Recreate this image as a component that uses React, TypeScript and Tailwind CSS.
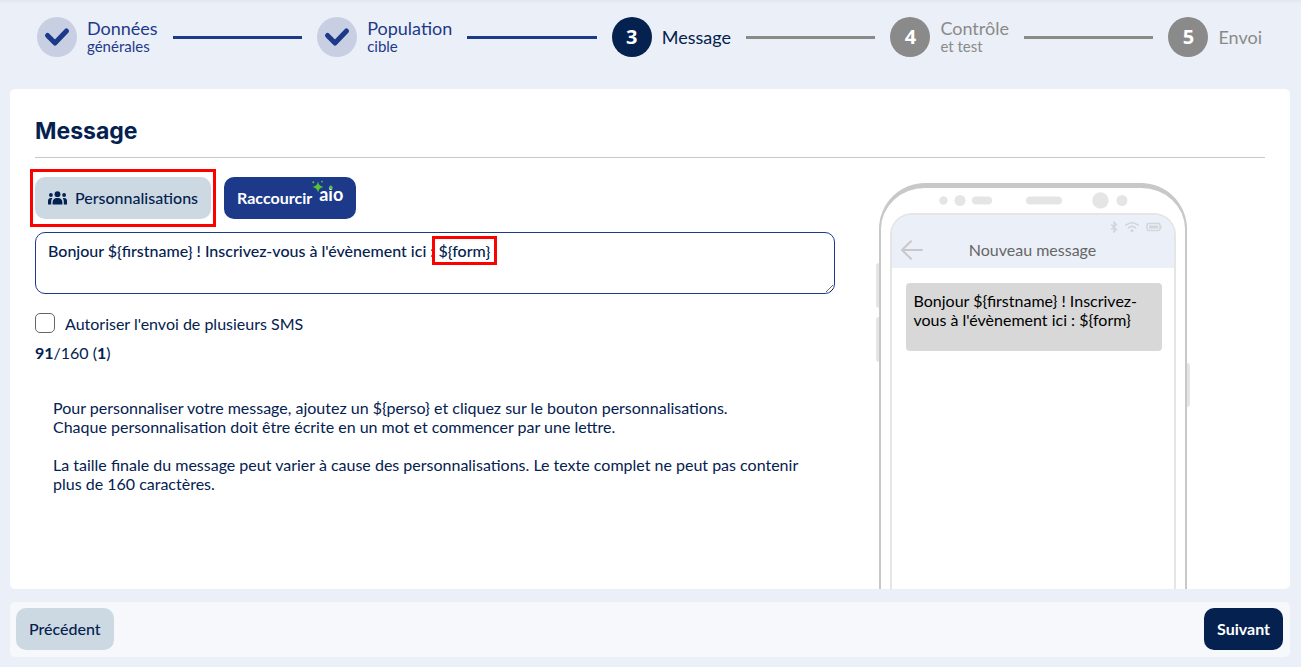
import { Fragment, useState } from "react"

interface Step {
    title: string
    subtitle?: string
    state: "done" | "current" | "todo"
}

const steps: Step[] = [
    { title: "Données", subtitle: "générales", state: "done" },
    { title: "Population", subtitle: "cible", state: "done" },
    { title: "Message", state: "current" },
    { title: "Contrôle", subtitle: "et test", state: "todo" },
    { title: "Envoi", state: "todo" },
]

const circleStyles = {
    done: "bg-[#c9cfe2] text-[#1d3a8a]",
    current: "bg-[#04214f] text-white",
    todo: "bg-[#8a8a8a] text-white",
}

const labelStyles = {
    done: "text-[#1d3a8a]",
    current: "text-[#04214f]",
    todo: "text-[#8a8a8a]",
}

const MAX_LENGTH = 160
const PLACEHOLDER_EXTRA = 26

function Stepper() {
    return (
        <ol className="flex items-center gap-[15px] pt-[17px] pr-[39px] pl-[37px]">
            {steps.map((step, index) => (
                <Fragment key={step.title}>
                    <li className="flex items-center gap-2.5">
                        <span className={`flex size-10 shrink-0 items-center justify-center rounded-full font-['Open_Sans',sans-serif] text-xl leading-5 font-bold ${circleStyles[step.state]}`}>
                            {step.state === "done" ? (
                                <svg viewBox="0 0 40 40" className="size-10" fill="none" stroke="currentColor" strokeWidth="5" strokeLinecap="round" strokeLinejoin="round" aria-hidden="true">
                                    <path d="M10.5 18.5l7.5 7.5L29.5 14" />
                                </svg>
                            ) : (
                                index + 1
                            )}
                        </span>
                        <span className={labelStyles[step.state]}>
                            <span className="block text-lg leading-[18px]">{step.title}</span>
                            {step.subtitle && <span className="block text-[15px] leading-[18px]">{step.subtitle}</span>}
                        </span>
                    </li>
                    {index < steps.length - 1 && (
                        <li aria-hidden="true" className={`h-[3px] flex-1 ${step.state === "done" ? "bg-[#1d3a8a]" : "bg-[#8a8a8a]"}`} />
                    )}
                </Fragment>
            ))}
        </ol>
    )
}

function PeopleIcon() {
    return (
        <svg viewBox="0 0 19 14" className="h-3.5 w-[19px]" fill="currentColor" aria-hidden="true">
            <circle cx="9.5" cy="3.2" r="2.9" />
            <circle cx="2.9" cy="4" r="1.9" />
            <circle cx="16.1" cy="4" r="1.9" />
            <path d="M4.6 13.5v-2.2a4.2 4.2 0 0 1 4.2-4.2h1.4a4.2 4.2 0 0 1 4.2 4.2v2.2z" />
            <path d="M0 13.5v-3.4a3 3 0 0 1 3-3h1.3a6 6 0 0 0-1.1 3.6v2.8z" />
            <path d="M19 13.5v-3.4a3 3 0 0 0-3-3h-1.3a6 6 0 0 1 1.1 3.6v2.8z" />
        </svg>
    )
}

function AioLogo() {
    return (
        <span className="relative block pl-[7px] text-lg leading-5 font-bold">
            aio
            <svg viewBox="0 0 24 16" className="absolute -top-1 left-0 h-4 w-6" fill="#5bc236" aria-hidden="true">
                <path d="M6 1.5Q6.8 6.2 11.5 7Q6.8 7.8 6 12.5Q5.2 7.8.5 7Q5.2 6.2 6 1.5z" />
                <circle cx="1.3" cy="2.3" r="1" />
                <circle cx="10" cy="1.6" r=".9" />
                <circle cx="18.8" cy="7.4" r="1.8" />
            </svg>
        </span>
    )
}

function Phone({ message }: { message: string }) {
    return (
        <div className="relative w-[308px] shrink-0 rounded-t-[46px] border-x-2 border-t-[5px] border-[#c8c8c8] px-[9px]">
            {/* Side buttons */}
            <span className="absolute top-[75px] -left-[5px] h-[45px] w-[3px] rounded-l-sm bg-[#e5e5e5]" />
            <span className="absolute top-[129px] -left-[5px] h-[45px] w-[3px] rounded-l-sm bg-[#e5e5e5]" />
            <span className="absolute top-[175px] -right-[5px] h-[44px] w-[3px] rounded-r-sm bg-[#e5e5e5]" />

            <div className="flex h-full flex-col">
                <svg viewBox="0 0 286 25" className="block h-[25px] w-full shrink-0" fill="#e5e5e5" aria-hidden="true">
                    <circle cx="53.5" cy="12.5" r="4.2" />
                    <circle cx="70" cy="12.5" r="5.6" />
                    <rect x="82" y="8.5" width="20" height="8" rx="4" />
                    <rect x="136" y="8.5" width="36" height="8" rx="4" />
                    <circle cx="210.5" cy="12.5" r="8.2" />
                    <circle cx="232" cy="12.5" r="5.5" />
                </svg>
                <div className="flex-1 overflow-hidden rounded-t-[22px] border-2 border-b-0 border-[#e5e5e5]">
                    <div className="bg-[#ebeff7] px-[9px] pt-1.5 pb-2 text-[#c8c8c8]">
                        <div className="flex items-center justify-end gap-[7px] pr-[3px] text-[#d3d5d9]">
                            <svg viewBox="0 0 8 12" className="h-3 w-2" fill="none" stroke="currentColor" strokeWidth="1.4" aria-hidden="true">
                                <path d="M1.2 3.5l5.3 5L4 11V1l2.5 2.5-5.3 5" />
                            </svg>
                            <svg viewBox="0 0 14 12" className="h-3 w-3.5" fill="none" stroke="currentColor" strokeWidth="1.6" strokeLinecap="round" aria-hidden="true">
                                <path d="M.8 4.2q6.2-4.8 12.4 0M3.4 6.8q3.6-2.8 7.2 0" />
                                <circle cx="7" cy="9.8" r="1.5" fill="currentColor" stroke="none" />
                            </svg>
                            <svg viewBox="0 0 16 12" className="h-3 w-4" fill="none" stroke="currentColor" aria-hidden="true">
                                <rect x="1" y="2.6" width="13" height="6.8" rx="1.6" strokeWidth="1.5" />
                                <rect x="3" y="4.5" width="9" height="3" fill="currentColor" stroke="none" />
                                <path d="M15.2 4.5v3" />
                            </svg>
                        </div>
                        <div className="grid grid-cols-[1fr_auto_1fr] items-center pt-[7px]">
                            <svg viewBox="0 0 22 20" className="h-5 w-[22px]" fill="none" stroke="currentColor" strokeWidth="2" strokeLinecap="round" strokeLinejoin="round" aria-hidden="true">
                                <path d="M10 1.2L1 10l9 8.8M1 10h20" />
                            </svg>
                            <span className="text-base leading-5 text-[#666]">Nouveau message</span>
                        </div>
                    </div>
                    <p className="mt-[15px] mr-3 ml-3.5 min-h-[68px] rounded bg-[#d8d8d8] p-2 text-base leading-[19px] text-black">
                        {message}
                    </p>
                </div>
            </div>
        </div>
    )
}

export default function App() {
    const [message, setMessage] = useState("Bonjour ${firstname} ! Inscrivez-vous à l'évènement ici : ${form}")
    const [allowMultiple, setAllowMultiple] = useState(false)

    const count = message.length + PLACEHOLDER_EXTRA
    const smsCount = Math.max(1, Math.ceil(count / MAX_LENGTH))

    return (
        <div className="flex min-h-screen flex-col bg-[#ebeff7] pb-2.5 font-['Lato',sans-serif] text-base text-[#04214f] shadow-[inset_0_4px_3px_-3px_#dfe3ec]">
            <Stepper />

            <main className="mt-8 mr-[11px] ml-2.5 flex flex-1 flex-col rounded-[5px] bg-white px-[25px] pt-6">
                <h1 className="border-b border-[#c8c8c8] pb-2 font-['Inter',sans-serif] text-[23px] leading-9 font-bold">Message</h1>

                <div className="flex flex-1">
                    <div className="w-[65%] pt-[19px]">
                        <div className="flex gap-[13px]">
                            <div className="relative">
                                <button type="button" className="flex h-[42px] items-center gap-2 rounded-[10px] bg-[#cdd9e2] px-[13px] font-medium">
                                    <PeopleIcon />
                                    Personnalisations
                                </button>
                                <span className="pointer-events-none absolute -inset-x-[5px] -inset-y-2 border-3 border-[#ff0000]" />
                            </div>
                            <button type="button" className="flex h-[42px] items-center rounded-[10px] bg-[#1d3a8a] px-[13px] font-bold text-white">
                                Raccourcir
                                <span className="pb-2">
                                    <AioLogo />
                                </span>
                            </button>
                        </div>

                        <div className="relative mt-[13px]">
                            <textarea
                                aria-label="Message"
                                value={message}
                                onChange={(e) => setMessage(e.target.value)}
                                className="block h-[62px] w-full rounded-[10px] border border-[#1d3a8a] px-3 py-2 leading-[19px] font-medium outline-none"
                            />
                            <span className="pointer-events-none absolute top-1 left-[397px] h-[29px] w-[65px] border-3 border-[#ff0000]" />
                        </div>

                        <label className="mt-[19px] flex items-center gap-2.5 leading-[19px]">
                            <input
                                type="checkbox"
                                checked={allowMultiple}
                                onChange={(e) => setAllowMultiple(e.target.checked)}
                                className="size-5 appearance-none rounded-[5px] border border-[#666] bg-white checked:bg-[#1d3a8a]"
                            />
                            Autoriser l'envoi de plusieurs SMS
                        </label>

                        <p className="mt-2.5 leading-[19px]">
                            <b>{count}</b>/{MAX_LENGTH} (<b>{smsCount}</b>)
                        </p>

                        <div className="mt-9 space-y-[19px] px-[18px] leading-[19px]">
                            <p>
                                Pour personnaliser votre message, ajoutez un {"${perso}"} et cliquez sur le bouton personnalisations.
                                <br />
                                Chaque personnalisation doit être écrite en un mot et commencer par une lettre.
                            </p>
                            <p>
                                La taille finale du message peut varier à cause des personnalisations. Le texte complet ne peut pas contenir
                                plus de 160 caractères.
                            </p>
                        </div>
                    </div>

                    <div className="flex pt-[25px] pl-11">
                        <Phone message={message} />
                    </div>
                </div>
            </main>

            <footer className="mt-[13px] mr-[11px] ml-2.5 flex justify-between rounded-[5px] bg-[#f6f8fc] pt-1.5 pr-[7px] pb-[7px] pl-1.5">
                <button type="button" className="h-[42px] rounded-[10px] bg-[#cdd9e2] px-[13px] font-medium">
                    Précédent
                </button>
                <button type="button" className="h-[42px] rounded-[10px] bg-[#04214f] px-[13px] font-bold text-white">
                    Suivant
                </button>
            </footer>
        </div>
    )
}
